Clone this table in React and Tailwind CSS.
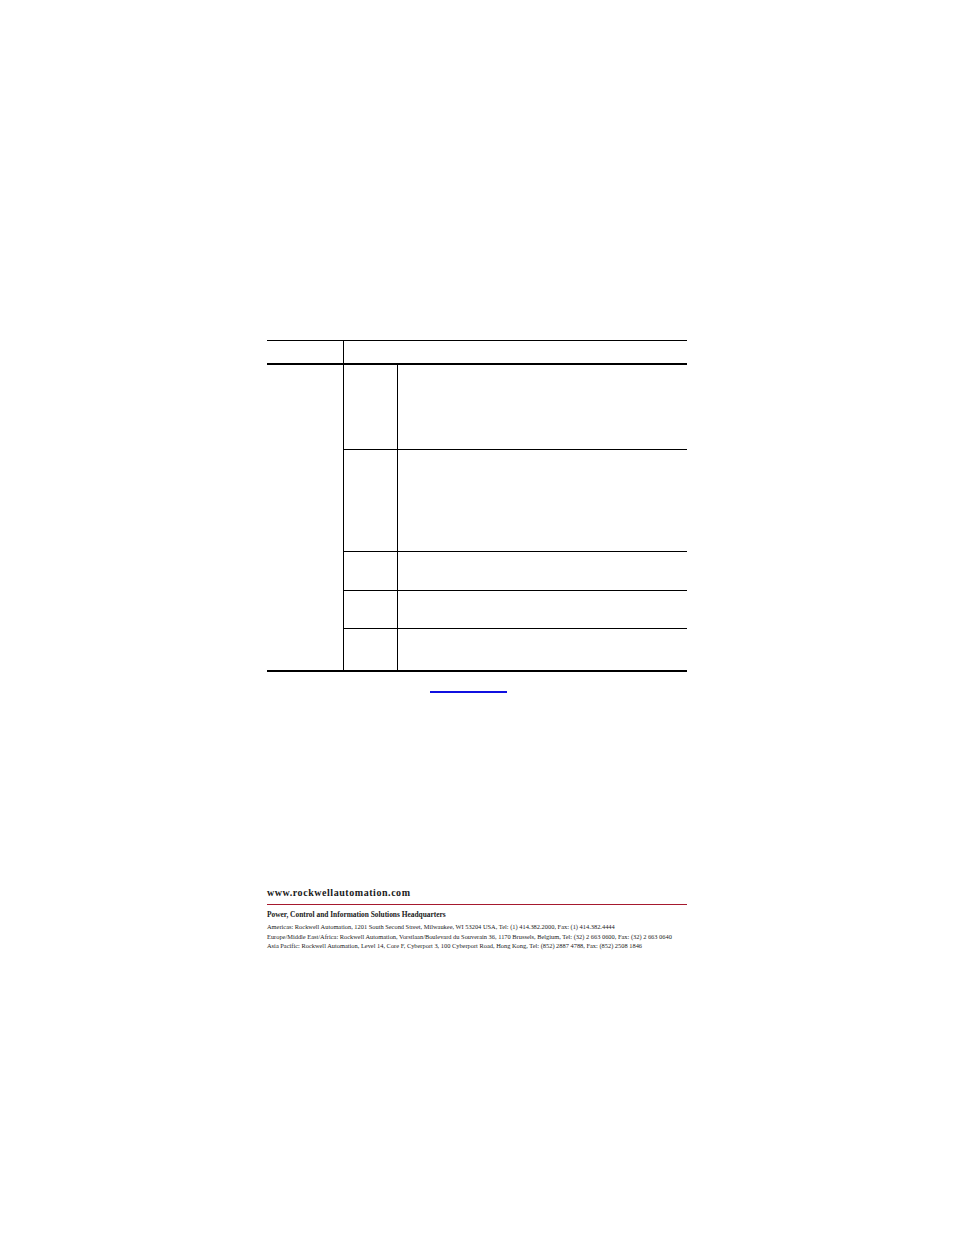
import React from 'react';

// body rows of the table: height of each row (content only, border below)
const bodyRows = [84, 101, 38, 37, 41];

function SpecTable() {
  return (
    <div className="w-[420px]">
      {/* header row */}
      <div className="flex h-[25px] border-t border-b-2 border-black">
        <div className="w-[77px] border-r border-black"></div>
        <div className="flex-1"></div>
      </div>

      {/* body */}
      <div className="flex border-b-2 border-black">
        <div className="w-[77px] border-r border-black"></div>
        <div className="flex-1 flex flex-col">
          {bodyRows.map((h, i) => (
            <div
              key={i}
              className={`flex ${i < bodyRows.length - 1 ? 'border-b border-black' : ''}`}
              style={{ height: i < bodyRows.length - 1 ? h + 1 : h }}
            >
              <div className="w-[54px] border-r border-black"></div>
              <div className="flex-1"></div>
            </div>
          ))}
        </div>
      </div>

      {/* link line under the table */}
      <div className="mt-[19px] ml-[163px] w-[77px] h-[2px] bg-[#1010e0]"></div>
    </div>
  );
}

function Footer() {
  return (
    <div className="w-[420px] font-['Liberation_Serif',serif] text-[#1a1a1a]">
      <div className="text-[10px] font-bold leading-[12px] tracking-[0.55px]">
        www.rockwellautomation.com
      </div>
      <div className="mt-[5px] h-px bg-[#a6192e]"></div>
      <div className="mt-[5px] text-[7.4px] font-bold leading-[9px]">
        Power, Control and Information Solutions Headquarters
      </div>
      <div className="mt-[3px] text-[6.4px] leading-[10px] whitespace-nowrap">
        <div>Americas: Rockwell Automation, 1201 South Second Street, Milwaukee, WI 53204 USA, Tel: (1) 414.382.2000, Fax: (1) 414.382.4444</div>
        <div>Europe/Middle East/Africa: Rockwell Automation, Vorstlaan/Boulevard du Souverain 36, 1170 Brussels, Belgium, Tel: (32) 2 663 0600, Fax: (32) 2 663 0640</div>
        <div className="-mt-[1px]">Asia Pacific: Rockwell Automation, Level 14, Core F, Cyberport 3, 100 Cyberport Road, Hong Kong, Tel: (852) 2887 4788, Fax: (852) 2508 1846</div>
      </div>
    </div>
  );
}

export default function App() {
  return (
    <div className="w-[954px] min-h-[1235px] bg-white pl-[267px] pt-[340px]">
      <SpecTable />
      <div className="mt-[194px]">
        <Footer />
      </div>
    </div>
  );
}
